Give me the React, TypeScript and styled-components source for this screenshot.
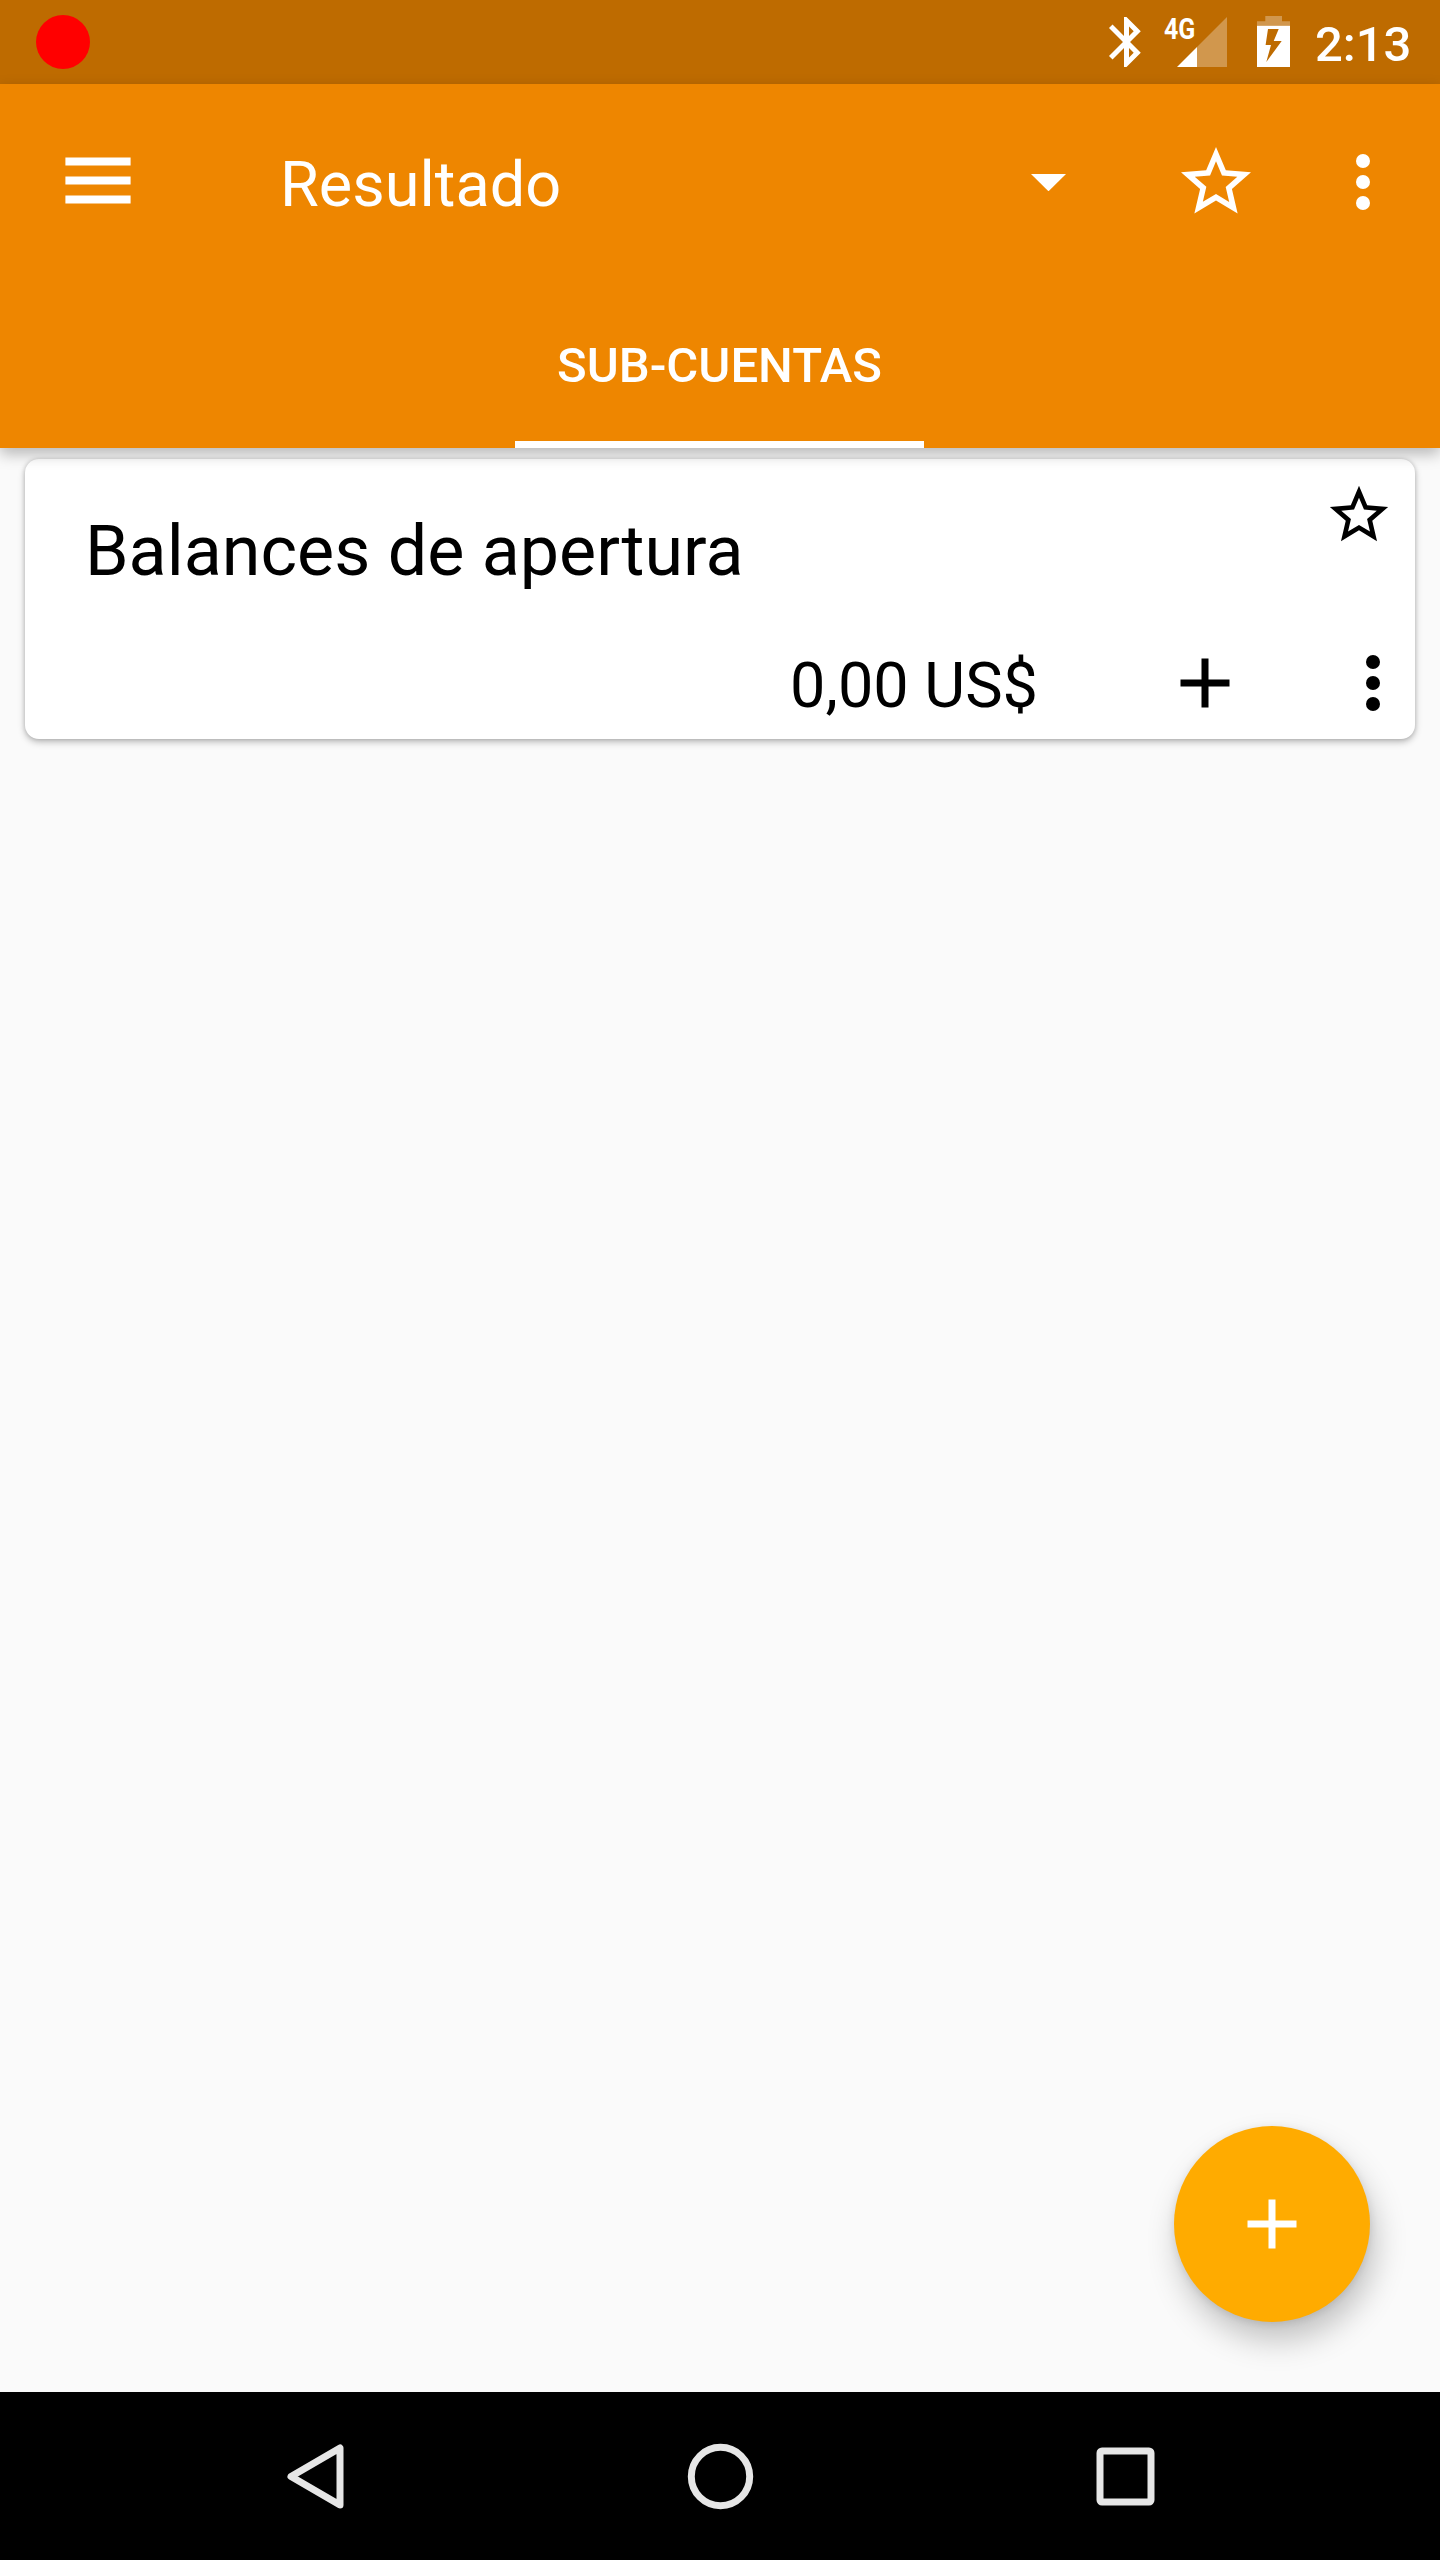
import React from "react";
import styled, { createGlobalStyle } from "styled-components";

const GlobalStyle = createGlobalStyle`
  *, *::before, *::after { box-sizing: border-box; }
  html, body { margin: 0; padding: 0; background: #fafafa; }
  body { font-family: Roboto, "Noto Sans", sans-serif; }
  button { border: 0; padding: 0; background: none; font: inherit; color: inherit; }
`;

const Screen = styled.div`
  position: relative;
  display: flex;
  flex-direction: column;
  width: 1440px;
  height: 2560px;
  overflow: hidden;
  background: #fafafa;
`;

const StatusBar = styled.div`
  display: flex;
  align-items: flex-start;
  justify-content: space-between;
  height: 84px;
  padding: 0 31px 0 36px;
  background: #be6b00;
  color: #fff;
`;

const RecordDot = styled.span`
  width: 54px;
  height: 54px;
  margin-top: 15px;
  border-radius: 50%;
  background: #f00;
`;

const StatusIcons = styled.div`
  display: flex;
  align-items: flex-start;
  height: 84px;
`;

const Glyph = styled.svg<{ $w: number; $h: number }>`
  display: block;
  flex: none;
  width: ${(p) => p.$w}px;
  height: ${(p) => p.$h}px;
`;

const Signal = styled.div`
  display: flex;
  flex: none;
  width: 100px;
  height: 84px;
  padding-left: 7px;
`;

const NetworkType = styled.span`
  flex: none;
  width: 13px;
  margin-top: 12px;
  font-size: 29px;
  line-height: 34px;
  font-weight: 700;
  white-space: nowrap;
`;

const Condensed = styled.span`
  display: inline-block;
  transform: scaleX(0.86);
  transform-origin: 0 50%;
`;

const Clock = styled.span`
  width: 94px;
  margin-left: 25px;
  font-size: 49px;
  font-weight: 500;
  line-height: 58px;
  padding-top: 16px;
  white-space: nowrap;
`;

const AppBar = styled.header`
  position: relative;
  z-index: 2;
  height: 364px;
  background: #ee8600;
  color: #fff;
  box-shadow: 0 6px 14px rgba(0, 0, 0, 0.27);
`;

const Toolbar = styled.div`
  display: flex;
  align-items: center;
  height: 196px;
  padding: 0 35px 0 56px;
`;

const IconButton = styled.button<{ $w: number; $h: number; $gap?: number }>`
  display: flex;
  flex: none;
  align-items: center;
  justify-content: center;
  width: ${(p) => p.$w}px;
  height: ${(p) => p.$h}px;
  margin-right: ${(p) => p.$gap ?? 0}px;
`;

const AccountPicker = styled.div`
  display: flex;
  flex: 1;
  align-items: center;
  justify-content: space-between;
  margin-left: 140px;
  padding-right: 66px;
`;

const Title = styled.h1`
  margin: 0;
  padding-top: 6px;
  font-size: 63px;
  font-weight: 400;
  line-height: 74px;
`;

const Tabs = styled.nav`
  display: flex;
  justify-content: center;
  height: 168px;
`;

const Tab = styled.button`
  display: flex;
  align-items: center;
  justify-content: center;
  width: 409px;
  height: 168px;
  padding-top: 11px;
  margin-right: 1px;
  border-bottom: 7px solid #fff;
  font-size: 49px;
  font-weight: 500;
  line-height: 58px;
  white-space: nowrap;
`;

const Content = styled.main`
  flex: 1;
  padding: 11px 25px 0;
`;

const Card = styled.article`
  height: 280px;
  padding: 21px 21px 0 60px;
  border-radius: 14px;
  background: #fff;
  box-shadow: 0 3px 7px rgba(0, 0, 0, 0.26), 0 0 4px rgba(0, 0, 0, 0.14);
`;

const CardHeader = styled.div`
  display: flex;
  justify-content: space-between;
  height: 161px;
`;

const AccountName = styled.h2`
  margin: 0;
  padding-top: 30px;
  font-size: 70px;
  font-weight: 400;
  line-height: 82px;
  color: #000;
`;

const CardFooter = styled.div`
  display: flex;
  align-items: center;
  justify-content: flex-end;
  height: 84px;
`;

const Balance = styled.span`
  margin-right: 125px;
  padding-top: 6px;
  font-size: 63px;
  line-height: 74px;
  color: #000;
  white-space: nowrap;
`;

const AddButton = styled.button`
  position: absolute;
  right: 70px;
  bottom: 238px;
  display: flex;
  align-items: center;
  justify-content: center;
  width: 196px;
  height: 196px;
  border-radius: 50%;
  background: #ffab00;
  box-shadow: 5px 18px 32px rgba(0, 0, 0, 0.23), 0 2px 8px rgba(0, 0, 0, 0.1);
`;

const NavBar = styled.footer`
  display: flex;
  align-items: center;
  justify-content: center;
  gap: 321px;
  height: 168px;
  background: #000;
`;

const STAR =
  "M22 9.24l-7.19-.62L12 2 9.19 8.63 2 9.24l5.46 4.73L5.82 21 12 17.27 18.18 21l-1.63-7.03L22 9.24zM12 15.4l-3.76 2.27 1-4.28-3.32-2.88 4.38-.38L12 6.1l1.71 4.04 4.38.38-3.32 2.88 1 4.28L12 15.4z";

const Star = ({ size, color }: { size: number; color: string }) => (
  <Glyph $w={size} $h={size} viewBox="0 0 24 24" fill={color}>
    <path d={STAR} />
  </Glyph>
);

const Dots = ({ color }: { color: string }) => (
  <Glyph $w={14} $h={56} viewBox="0 0 14 56" fill={color}>
    <circle cx="7" cy="7" r="7" />
    <circle cx="7" cy="28" r="7" />
    <circle cx="7" cy="49" r="7" />
  </Glyph>
);

const Plus = ({ color }: { color: string }) => (
  <Glyph $w={84} $h={84} viewBox="0 0 24 24" fill={color}>
    <path d="M19 13h-6v6h-2v-6H5v-2h6V5h2v6h6v2z" />
  </Glyph>
);

const App = () => (
  <>
    <GlobalStyle />
    <Screen>
      <StatusBar>
        <RecordDot />
        <StatusIcons>
          <Glyph $w={60} $h={84} viewBox="0 0 60 84" fill="#fff">
            <path
              transform="translate(-0.5 12) scale(2.5)"
              d="M17.71 7.71L12 2h-1v7.59L6.41 5 5 6.41 10.59 12 5 17.59 6.41 19 11 14.41V22h1l5.71-5.71-4.3-4.29 4.3-4.29zM13 5.83l1.88 1.88L13 9.59V5.83zm1.88 10.46L13 18.17v-3.76l1.88 1.88z"
            />
          </Glyph>
          <Signal>
            <NetworkType>
              <Condensed>4G</Condensed>
            </NetworkType>
            <Glyph $w={50} $h={84} viewBox="0 0 50 84" fill="#fff">
              <path d="M20 47V67H0z" />
              <path d="M50 17V67H20V47z" opacity="0.3" />
            </Glyph>
          </Signal>
          <Glyph $w={33} $h={84} viewBox="0 0 33 84" fill="#fff">
            <path d="M8.3 16h16.7v5.2H33v4.6H0v-4.6h8.3z" opacity="0.3" />
            <path
              fillRule="evenodd"
              d="M0 25.8h33V67H0zM11 29L8.6 45h5.4L9.3 62 24.7 41h-8L21.7 29z"
            />
          </Glyph>
          <Clock>2:13</Clock>
        </StatusIcons>
      </StatusBar>
      <AppBar>
        <Toolbar>
          <IconButton $w={84} $h={84} aria-label="Menú">
            <Glyph $w={66} $h={50} viewBox="0 0 66 50" fill="#fff">
              <path d="M0.4 0.6h65.2v7.8H0.4zM0.4 19.6h65.2v7.8H0.4zM0.4 38.6h65.2v7.8H0.4z" />
            </Glyph>
          </IconButton>
          <AccountPicker>
            <Title>Resultado</Title>
            <Glyph $w={35} $h={17} viewBox="0 0 35 17" fill="#fff">
              <path d="M0 0h35L17.5 17.3z" />
            </Glyph>
          </AccountPicker>
          <IconButton $w={168} $h={168} $gap={21} aria-label="Favorito">
            <Star size={84} color="#fff" />
          </IconButton>
          <IconButton $w={84} $h={168} aria-label="Más opciones">
            <Dots color="#fff" />
          </IconButton>
        </Toolbar>
        <Tabs>
          <Tab>SUB-CUENTAS</Tab>
        </Tabs>
      </AppBar>
      <Content>
        <Card>
          <CardHeader>
            <AccountName>Balances de apertura</AccountName>
            <Star size={70} color="#000" />
          </CardHeader>
          <CardFooter>
            <Balance>0,00 US$</Balance>
            <IconButton $w={84} $h={84} $gap={105} aria-label="Añadir transacción">
              <Plus color="#000" />
            </IconButton>
            <IconButton $w={42} $h={84} aria-label="Más opciones">
              <Dots color="#000" />
            </IconButton>
          </CardFooter>
        </Card>
      </Content>
      <NavBar>
        <IconButton $w={84} $h={84} aria-label="Atrás">
          <Glyph $w={84} $h={84} viewBox="0 0 84 84" fill="none" stroke="#e6e6e6" strokeWidth="7" strokeLinejoin="round">
            <path d="M67 14v57L18 42.5z" />
          </Glyph>
        </IconButton>
        <IconButton $w={84} $h={84} aria-label="Inicio">
          <Glyph $w={84} $h={84} viewBox="0 0 84 84" fill="none" stroke="#e6e6e6" strokeWidth="7">
            <circle cx="42.5" cy="42.5" r="29.2" />
          </Glyph>
        </IconButton>
        <IconButton $w={84} $h={84} aria-label="Recientes">
          <Glyph $w={84} $h={84} viewBox="0 0 84 84" fill="none" stroke="#e6e6e6" strokeWidth="7">
            <rect x="17" y="17" width="51" height="51" rx="2" />
          </Glyph>
        </IconButton>
      </NavBar>
      <AddButton aria-label="Añadir">
        <Plus color="#fff" />
      </AddButton>
    </Screen>
  </>
);

export default App;
